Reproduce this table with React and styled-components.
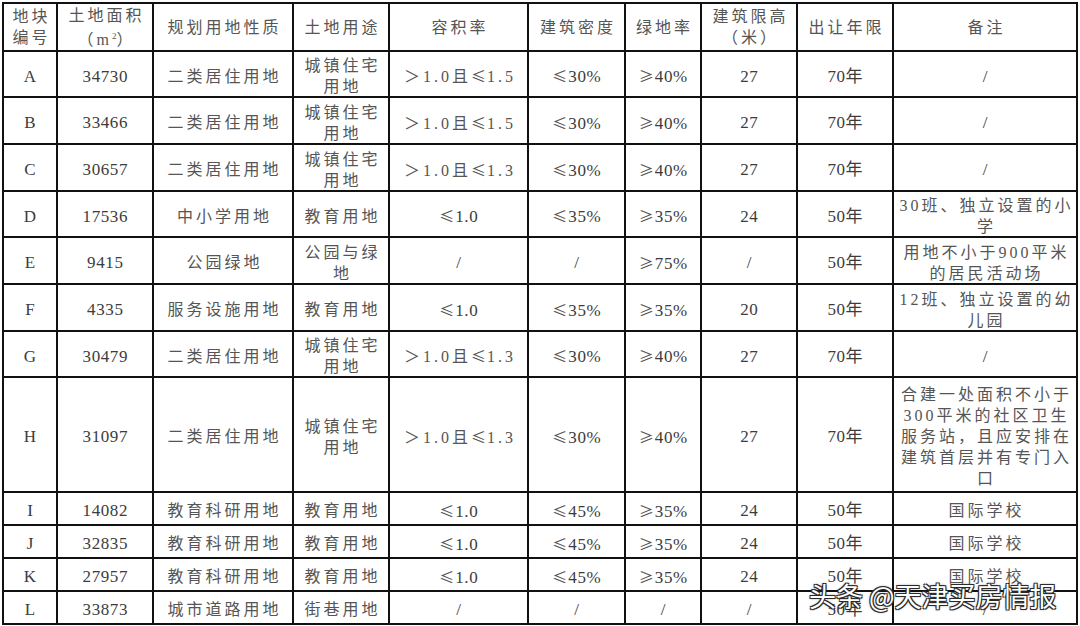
import React from "react";
import styled, { createGlobalStyle } from "styled-components";

const Global = createGlobalStyle`
  html, body { margin: 0; padding: 0; background: #ffffff; }
  body { width: 1080px; height: 626px; overflow: hidden; }
`;

const COLS = "52px 94px 138px 94px 137px 95px 74px 94px 94px 182px";

const Page = styled.div`
  position: relative;
  width: 1080px;
  height: 626px;
  padding: 2px 0 0 2px;
  box-sizing: border-box;
`;

const Table = styled.div`
  display: flex;
  flex-direction: column;
  gap: 2px;
  padding: 2px;
  width: max-content;
  background: #111;
`;

const Row = styled.div`
  display: grid;
  grid-template-columns: ${COLS};
  column-gap: 2px;
  height: ${(p) => p.$h}px;
`;

const Cell = styled.div`
  display: flex;
  flex-direction: column;
  align-items: center;
  justify-content: center;
  background: #fff;
  color: ${(p) => (p.$num ? "#3c3c3c" : "#555")};
  font-family: "Liberation Serif", "Noto Sans CJK SC", serif;
  font-size: ${(p) => (p.$num ? 17 : 16)}px;
  letter-spacing: ${(p) => (p.$num ? 0.6 : 3)}px;
  padding-left: ${(p) => (p.$num ? 0.6 : 3)}px;
  padding-top: ${(p) => (p.$head ? 0 : 4)}px;
  line-height: 21px;
  text-align: center;
  white-space: nowrap;
  overflow: hidden;
  box-sizing: border-box;
`;

const Line = styled.span`
  display: block;
`;

const Sym = styled.span`
  font-family: "Noto Sans CJK SC", sans-serif;
  font-size: 15px;
  color: #555;
  letter-spacing: 0;
  margin-right: 1px;
`;

const Sup = styled.span`
  font-size: 9px;
  vertical-align: 6px;
  letter-spacing: 0;
`;

const Watermark = styled.div`
  position: absolute;
  left: 809px;
  top: 579px;
  font-family: "Noto Sans CJK SC", "Noto Sans", sans-serif;
  font-size: 27px;
  line-height: 34px;
  color: #ffffff;
  white-space: nowrap;
  text-shadow:
    1px 1px 0 #2a2a2a,
    -1px -1px 0 #2a2a2a,
    1px -1px 0 #2a2a2a,
    -1px 1px 0 #2a2a2a,
    0 0 3px #444;
`;

const header = [
  "地块|编号",
  "土地面积|（m²）",
  "规划用地性质",
  "土地用途",
  "容积率",
  "建筑密度",
  "绿地率",
  "建筑限高|（米）",
  "出让年限",
  "备注",
];

const rows = [
  { h: 44, c: ["A", "34730", "二类居住用地", "城镇住宅|用地", "＞1.0且≤1.5", "≤30%", "≥40%", "27", "70年", "/"] },
  { h: 45, c: ["B", "33466", "二类居住用地", "城镇住宅|用地", "＞1.0且≤1.5", "≤30%", "≥40%", "27", "70年", "/"] },
  { h: 45, c: ["C", "30657", "二类居住用地", "城镇住宅|用地", "＞1.0且≤1.3", "≤30%", "≥40%", "27", "70年", "/"] },
  { h: 44, c: ["D", "17536", "中小学用地", "教育用地", "≤1.0", "≤35%", "≥35%", "24", "50年", "30班、独立设置的小|学"] },
  { h: 45, c: ["E", "9415", "公园绿地", "公园与绿|地", "/", "/", "≥75%", "/", "50年", "用地不小于900平米|的居民活动场"] },
  { h: 45, c: ["F", "4335", "服务设施用地", "教育用地", "≤1.0", "≤35%", "≥35%", "20", "50年", "12班、独立设置的幼|儿园"] },
  { h: 44, c: ["G", "30479", "二类居住用地", "城镇住宅|用地", "＞1.0且≤1.3", "≤30%", "≥40%", "27", "70年", "/"] },
  {
    h: 113,
    c: [
      "H", "31097", "二类居住用地", "城镇住宅|用地", "＞1.0且≤1.3", "≤30%", "≥40%", "27", "70年",
      "合建一处面积不小于|300平米的社区卫生|服务站，且应安排在|建筑首层并有专门入|口",
    ],
  },
  { h: 31, c: ["I", "14082", "教育科研用地", "教育用地", "≤1.0", "≤45%", "≥35%", "24", "50年", "国际学校"] },
  { h: 31, c: ["J", "32835", "教育科研用地", "教育用地", "≤1.0", "≤45%", "≥35%", "24", "50年", "国际学校"] },
  { h: 31, c: ["K", "27957", "教育科研用地", "教育用地", "≤1.0", "≤45%", "≥35%", "24", "50年", "国际学校"] },
  { h: 31, c: ["L", "33873", "城市道路用地", "街巷用地", "/", "/", "/", "/", "50年", "/"] },
];

const isNum = (t) => /^[A-Z0-9%≤≥/年.]+$/.test(t);

function renderPart(p) {
  return p.split(/([≤≥²])/).map((s, i) => {
    if (s === "≤" || s === "≥") return <Sym key={i}>{s}</Sym>;
    if (s === "²") return <Sup key={i}>2</Sup>;
    return s;
  });
}

function Content({ text, head }) {
  const parts = text.split("|");
  return (
    <Cell $num={!head && isNum(text)} $head={head}>
      {parts.map((p, i) => (
        <Line key={i}>{renderPart(p)}</Line>
      ))}
    </Cell>
  );
}

export default function App() {
  return (
    <Page>
      <Global />
      <Table>
        <Row $h={46}>
          {header.map((t, i) => (
            <Content key={i} text={t} head />
          ))}
        </Row>
        {rows.map((r, i) => (
          <Row key={i} $h={r.h}>
            {r.c.map((t, j) => (
              <Content key={j} text={t} />
            ))}
          </Row>
        ))}
      </Table>
      <Watermark>头条 @天津买房情报</Watermark>
    </Page>
  );
}
